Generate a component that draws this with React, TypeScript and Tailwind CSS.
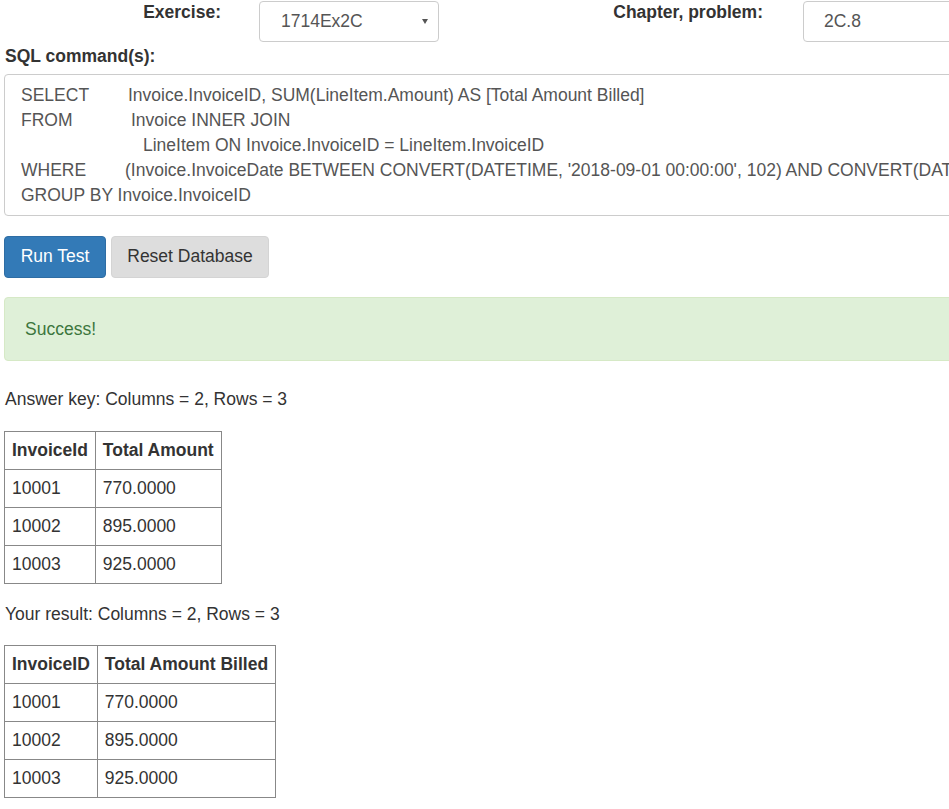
import * as React from "react";

const answerKey = [
  ["10001", "770.0000"],
  ["10002", "895.0000"],
  ["10003", "925.0000"],
];

function ResultTable({ headers, rows }: { headers: string[]; rows: string[][] }) {
  return (
    <table className="border-collapse border border-[#888]">
      <thead>
        <tr>
          {headers.map((h) => (
            <th key={h} className="border border-[#888] px-[7px] py-[6px] text-left font-bold leading-[25px]">
              {h}
            </th>
          ))}
        </tr>
      </thead>
      <tbody>
        {rows.map((r) => (
          <tr key={r[0]}>
            {r.map((c, i) => (
              <td key={i} className="border border-[#888] px-[7px] py-[6px] leading-[25px]">
                {c}
              </td>
            ))}
          </tr>
        ))}
      </tbody>
    </table>
  );
}

export default function App() {
  return (
    <div className="w-[949px] h-[809px] overflow-hidden bg-white text-[#333] text-[17.5px] leading-[25px] font-['Liberation_Sans',Arial,sans-serif]">
      <div className="w-[1200px] pl-[4px]">
        {/* exercise / chapter row */}
        <div className="flex items-start">
          <div className="w-[217px] text-right font-bold">Exercise:</div>
          <div className="ml-[38px] mt-[1px] h-[41px] w-[180px] rounded-[4px] border border-[#ccc] flex items-center justify-between pl-[21px] pr-[10px] text-[#555]">
            <span>1714Ex2C</span>
            <span className="w-0 h-0 border-l-[3px] border-r-[3px] border-t-[5px] border-l-transparent border-r-transparent border-t-[#555]" />
          </div>
          <div className="w-[324px] text-right font-bold">Chapter, problem:</div>
          <div className="ml-[40px] mt-[1px] h-[41px] w-[300px] rounded-[4px] border border-[#ccc] flex items-center pl-[20px] text-[#555]">
            2C.8
          </div>
        </div>

        <div className="mt-[1.5px] pl-[1px] font-bold">SQL command(s):</div>

        {/* sql box */}
        <div className="mt-[5.5px] w-[1100px] rounded-[4px] border border-[#ccc] pt-[8px] pb-[7px] pl-[16px] text-[#555] whitespace-nowrap">
          <div className="flex">
            <span className="w-[107px] shrink-0">SELECT</span>
            <span>Invoice.InvoiceID, SUM(LineItem.Amount) AS [Total Amount Billed]</span>
          </div>
          <div className="flex">
            <span className="w-[110px] shrink-0">FROM</span>
            <span>Invoice INNER JOIN</span>
          </div>
          <div className="pl-[122px]">LineItem ON Invoice.InvoiceID = LineItem.InvoiceID</div>
          <div className="flex">
            <span className="w-[104px] shrink-0">WHERE</span>
            <span>(Invoice.InvoiceDate BETWEEN CONVERT(DATETIME, '2018-09-01 00:00:00', 102) AND CONVERT(DATETIME, '2018-09-30 00:00:00', 102))</span>
          </div>
          <div>GROUP BY Invoice.InvoiceID</div>
        </div>

        {/* buttons */}
        <div className="mt-[20px] flex gap-[5px]">
          <button className="h-[42px] w-[102px] rounded-[4px] border border-[#2e6da4] bg-[#337ab7] pb-[2px] text-white">
            Run Test
          </button>
          <button className="h-[42px] w-[158px] rounded-[4px] border border-[#d4d4d4] bg-[#dddddd] pb-[2px] text-[#333]">
            Reset Database
          </button>
        </div>

        {/* alert */}
        <div className="mt-[19px] w-[1100px] rounded-[4px] border border-[#d6e9c6] bg-[#dff0d8] pt-[19px] pb-[18px] pl-[20px] text-[#3c763d]">
          Success!
        </div>

        <div className="mt-[26px] pl-[1px]">Answer key: Columns = 2, Rows = 3</div>
        <div className="mt-[19px]">
          <ResultTable headers={["InvoiceId", "Total Amount"]} rows={answerKey} />
        </div>

        <div className="mt-[18px] pl-[1px]">Your result: Columns = 2, Rows = 3</div>
        <div className="mt-[18px]">
          <ResultTable headers={["InvoiceID", "Total Amount Billed"]} rows={answerKey} />
        </div>
      </div>
    </div>
  );
}
